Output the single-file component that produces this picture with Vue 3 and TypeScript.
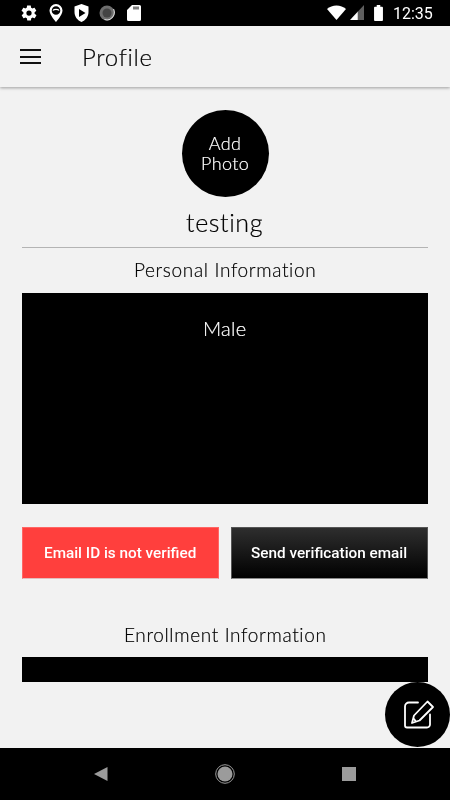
<script setup lang="ts">
const title: string = 'Profile'
</script>

<template>
  <div class="phone">
    <header class="status">
      <div class="status-left">
        <svg class="i-gear" width="18" height="18" viewBox="0 0 24 24"><path fill="#fff" d="M19.4 13c.1-.3.1-.7.1-1s0-.7-.1-1l2.1-1.6c.2-.2.2-.4.1-.6l-2-3.5c-.1-.2-.4-.3-.6-.2l-2.5 1c-.5-.4-1.100-.7-1.700-1l-.4-2.600c0-.3-.2-.5-.5-.5h-4c-.3 0-.5.2-.5.500l-.4 2.600c-.6.300-1.200.6-1.700 1l-2.500-1c-.2-.1-.5 0-.6.200l-2 3.500c-.1.200-.1.400.1.600L4.600 11c-.1.300-.1.700-.1 1s0 .7.1 1l-2.100 1.600c-.2.200-.2.400-.1.600l2 3.500c.1.200.4.300.6.200l2.500-1c.5.400 1.100.7 1.700 1l.4 2.600c0 .3.2.5.5.5h4c.3 0 .5-.2.5-.5l.4-2.600c.6-.3 1.200-.6 1.700-1l2.500 1c.2.100.5 0 .6-.2l2-3.500c.1-.2.100-.4-.1-.6L19.400 13zM12 15.500a3.500 3.500 0 1 1 0-7 3.500 3.500 0 0 1 0 7z"/></svg>
        <svg width="16" height="20" viewBox="0 0 16 20"><path fill="#fff" fill-rule="evenodd" d="M8 1a6.500 6.500 0 0 0-6.500 6.500C1.500 12 8 19 8 19s6.500-7 6.500-11.500A6.500 6.500 0 0 0 8 1zm0 2.200a4.300 4.300 0 1 1 0 8.600 4.300 4.300 0 0 1 0-8.600z"/><path fill="none" stroke="#fff" stroke-width="1.300" d="M5 7.500c1-1.500 5-1.500 6 0"/></svg>
        <svg width="15" height="20" viewBox="0 0 15 20"><path fill="#fff" fill-rule="evenodd" d="M7.500 1 .500 3.500v5.500c0 4.500 3 8.500 7 10 4-1.500 7-5.500 7-10V3.500L7.500 1zM5 6l6.500 4L5 14V6z"/></svg>
        <svg class="i-disc" width="16" height="16" viewBox="0 0 16 16"><circle cx="8" cy="8" r="7.500" fill="#6e6e6e"/><circle cx="8" cy="8" r="4.500" fill="#444"/><path d="M14.500 4a7.500 7.500 0 0 1-9 10.500" fill="none" stroke="#ddd" stroke-width="1.100"/></svg>
        <svg class="i-sd" width="14" height="16" viewBox="0 0 14 16"><path fill="#fff" d="M5 0h7.500A1.500 1.500 0 0 1 14 1.500v13a1.500 1.500 0 0 1-1.500 1.500h-11A1.500 1.500 0 0 1 0 14.500V5L5 0z"/><path stroke="#000" stroke-width="1" d="M7 1.500v3M9 1.500v3M11 1.500v3"/></svg>
      </div>
      <div class="status-right">
        <svg class="wifi" width="19" height="15" viewBox="0 0 22 17" preserveAspectRatio="none"><path fill="#fff" d="M0 4.500C3 2 6.800.500 11 .500S19 2 22 4.500L11 17 0 4.500z"/></svg>
        <svg class="signal" width="14" height="15" viewBox="0 0 16 16" preserveAspectRatio="none"><path fill="#fff" d="M0 16 9 7v9H0z"/><path fill="#5f5f5f" d="M9 7l7-7v16H9V7z"/></svg>
        <svg class="battery" width="9" height="16" viewBox="0 0 10 18"><path fill="#fff" d="M3 0h4v2h2a1 1 0 0 1 1 1v14a1 1 0 0 1-1 1H1a1 1 0 0 1-1-1V3a1 1 0 0 1 1-1h2V0z"/></svg>
        <span class="clock gray">12:35</span>
      </div>
    </header>

    <div class="toolbar">
      <div class="menu"><i></i><i></i><i></i></div>
      <h1 class="title gray">{{ title }}</h1>
    </div>

    <main class="content">
      <button class="avatar"><span class="gray light">Add<br />Photo</span></button>
      <div class="name gray light">testing</div>
      <hr class="rule" />
      <h2 class="section personal gray light">Personal Information</h2>
      <section class="panel"><span class="gray light">Male</span></section>
      <div class="actions">
        <div class="action danger"><span class="gray">Email ID is not verified</span></div>
        <div class="action dark"><span class="gray">Send verification email</span></div>
      </div>
      <h2 class="section enrollment gray light">Enrollment Information</h2>
      <div class="strip"></div>
      <button class="fab" aria-label="Edit">
        <svg width="34" height="34" viewBox="0 0 34 34" fill="none" stroke="#fff" stroke-width="1.800" stroke-linejoin="round" stroke-linecap="round">
          <path d="M17 4.500H8A4 4 0 0 0 4 8.500v19a2 2 0 0 0 2 2h20a3 3 0 0 0 3-3v-10"/>
          <path d="M26.500 3.500 32 9 18.500 22.500 11 25l2-7.500L26.500 3.500z"/>
          <path d="M13 21l1.500 2" />
        </svg>
      </button>
    </main>

    <nav class="nav">
      <svg width="14" height="14" viewBox="0 0 14 14"><path fill="#9b9b9b" d="M13.500 0v14L0 7z"/></svg>
      <svg width="20" height="20" viewBox="0 0 20 20"><circle cx="10" cy="10" r="9.300" fill="none" stroke="#9b9b9b" stroke-width="1"/><circle cx="10" cy="10" r="7.500" fill="#9b9b9b"/></svg>
      <svg width="14" height="14" viewBox="0 0 14 14"><rect width="14" height="14" fill="#9b9b9b"/></svg>
    </nav>
  </div>
</template>

<style>
html, body { margin: 0; background: #f2f2f2; }
</style>

<style scoped>
.phone {
  width: 450px;
  height: 800px;
  display: flex;
  flex-direction: column;
  overflow: hidden;
  background: #f2f2f2;
  font-family: "Lato", "Open Sans", sans-serif;
  font-weight: 300;
  color: #000;
}
.gray { display: inline-block; will-change: transform; }
.light, .title { -webkit-text-stroke: 0.2px currentColor; }
.status {
  height: 26px;
  flex: none;
  background: #000;
  display: flex;
  justify-content: space-between;
  align-items: center;
}
.status-left { display: flex; align-items: center; gap: 10px; padding-left: 20px; }
.i-gear { margin-right: -0.500px; }
.i-disc { margin-left: 0.500px; margin-top: -1px; }
.i-sd { margin-left: 2px; }
.status-right { display: flex; align-items: center; padding-right: 17px; }
.wifi { margin-top: -1px; }
.signal { margin-left: 4px; margin-top: -1px; }
.battery { margin-left: 10px; }
.clock {
  margin-left: 10px;
  font: 400 16px "Roboto", sans-serif;
  color: #fff;
}
.toolbar {
  height: 61px;
  flex: none;
  display: flex;
  align-items: center;
  background: #f2f2f2;
  box-shadow: 0 1px 3px rgba(0, 0, 0, 0.35);
  position: relative;
  z-index: 1;
}
.menu { width: 21px; margin-left: 20px; display: flex; flex-direction: column; gap: 4.500px; }
.menu i { display: block; height: 2px; background: #111; }
.title { margin: 0 0 0 41px; font-size: 24px; font-weight: 300; letter-spacing: 0.7px; }
.content {
  flex: 1;
  position: relative;
  display: flex;
  flex-direction: column;
  align-items: center;
  padding: 23px 22px 0;
}
.avatar {
  width: 87px;
  height: 87px;
  border: 0;
  border-radius: 50%;
  background: #000;
  color: #fff;
  font: 300 18px/20px "Lato", sans-serif;
  letter-spacing: 0.4px;
  padding: 0 0 2px;
}
.name { margin-top: 10px; font-size: 25px; line-height: 30px; letter-spacing: 0.6px; }
.rule { width: 100%; margin: 10px 0 0; border: 0; border-top: 1px solid #b4b4b4; }
.section { margin: 0; font-size: 19px; line-height: 24px; font-weight: 300; letter-spacing: 0.65px; }
.personal { margin-top: 10px; }
.panel {
  width: 100%;
  height: 211px;
  margin-top: 11px;
  box-sizing: border-box;
  padding-top: 23px;
  background: #000;
  color: #fff;
  text-align: center;
  font-size: 20px;
  line-height: 24px;
  letter-spacing: 0.3px;
}
.actions { width: 100%; display: flex; gap: 12px; margin-top: 23px; }
.action {
  flex: 1;
  height: 52px;
  display: flex;
  align-items: center;
  justify-content: center;
  color: #fff;
  font: 500 15.300px "Roboto", sans-serif;
  box-sizing: border-box;
}
.danger { background: #ff3f3d; border: 1px solid #ff6664; border-bottom-color: #e3bdbd; }
.dark {
  background: linear-gradient(#2e2e2e, #000);
  border: 1px solid #555;
  border-bottom-color: #888;
}
.enrollment { margin-top: 44px; }
.strip { width: 100%; height: 25px; margin-top: 10px; background: #000; }
.fab {
  position: absolute;
  right: 0;
  top: 595px;
  width: 65px;
  height: 65px;
  border: 0;
  border-radius: 50%;
  background: #000;
  padding: 0;
  display: flex;
  align-items: center;
  justify-content: center;
}
.nav {
  height: 52px;
  flex: none;
  background: #000;
  display: flex;
  align-items: center;
  padding-left: 94px;
  padding-right: 94px;
  justify-content: space-between;
}
</style>
